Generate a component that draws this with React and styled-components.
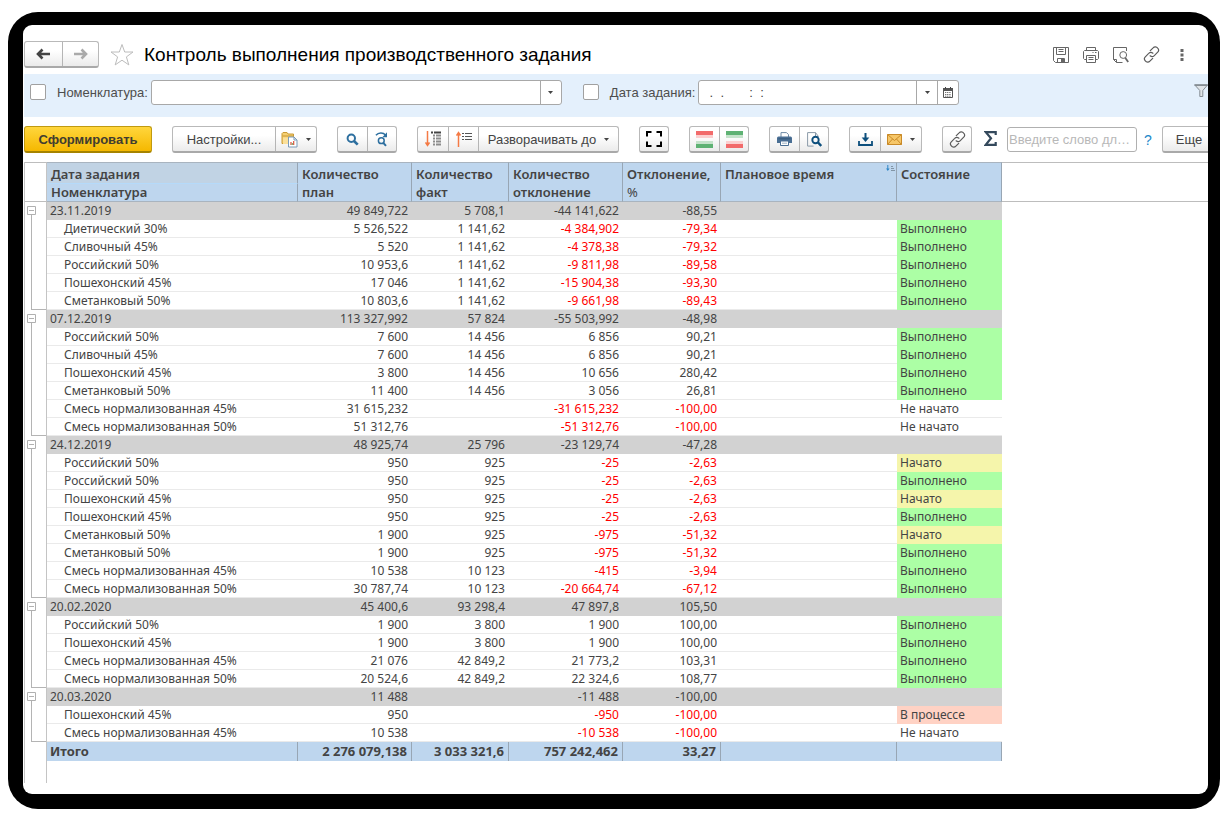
import React, { useState } from 'react';
import styled, { createGlobalStyle, css } from 'styled-components';

const ui = '"Liberation Sans", Arial, sans-serif';
const grid = '"Noto Sans", "Open Sans", sans-serif';

const Global = createGlobalStyle`
  * { box-sizing: border-box; }
  body { margin: 0; background: #fff; font-family: ${ui}; color: #444; }
  button, input { font-family: inherit; color: inherit; }
`;

const Device = styled.div`
  margin: 12px 8px 5px;
  min-height: calc(100vh - 17px);
  padding: 13px 12px 15px 15px;
  border-radius: 30px;
  background: #000;
  display: flex;
`;

const Screen = styled.main`
  flex: 1;
  min-width: 0;
  padding-left: 1px;
  border-radius: 9px;
  background: #fff;
  overflow: hidden;
`;

const TitleBar = styled.header`
  display: flex;
  align-items: center;
  height: 49px;
  padding: 10px 11px 0 0;
`;

const Title = styled.h1`
  margin: 0 auto 0 0;
  font-size: 19px;
  line-height: 24px;
  font-weight: 400;
  color: #000;
  white-space: nowrap;
`;

const IconButton = styled.button`
  display: flex;
  align-items: center;
  justify-content: center;
  width: ${(p) => p.$width || 30}px;
  height: 24px;
  padding: 0;
  border: 0;
  background: none;
`;

const Group = styled.div`
  display: flex;
  flex: none;
  height: 27px;
  border: 1px solid #b9b9b9;
  border-bottom: 2px solid #a9a9a9;
  border-radius: 3px;
  background: linear-gradient(#fff 35%, #ebebeb);
  overflow: hidden;
`;

const ToolButton = styled.button`
  display: flex;
  align-items: center;
  justify-content: center;
  gap: 8px;
  width: ${(p) => p.$width || 30}px;
  padding: 0;
  border: 0;
  background: none;
  font-size: 13px;
  white-space: nowrap;
  & + & { border-left: 1px solid #b5b5b5; }
`;

const FilterBar = styled.section`
  display: flex;
  align-items: center;
  height: 43px;
  padding: 0 0 7px 6px;
  background: #e4f0fc;
`;

const Check = styled.input`
  appearance: none;
  flex: none;
  width: 16px;
  height: 16px;
  margin: 0;
  border: 1px solid #a0a0a0;
  border-radius: 2px;
  background: #fff;
`;

const FieldLabel = styled.label`
  margin: 0 3px 0 11px;
  font-size: 13px;
  color: #4d4d4d;
  white-space: nowrap;
`;

const Field = styled.div`
  display: flex;
  flex: 0 1 ${(p) => p.$basis}px;
  min-width: 0;
  height: 25px;
  margin-right: 21px;
  border: 1px solid #a8a8a8;
  border-radius: 3px;
  background: #fff;
  overflow: hidden;
`;

const FieldInput = styled.input`
  flex: 1;
  min-width: 0;
  padding: 0 3px;
  border: 0;
  outline: 0;
  background: none;
  font-size: 13px;
`;

const FieldButton = styled.button`
  display: flex;
  align-items: center;
  justify-content: center;
  width: 21px;
  padding: 0;
  border: 0;
  border-left: 1px solid #a8a8a8;
  background: none;
`;

const FilterToggle = styled.button`
  flex: none;
  width: 14px;
  height: 16px;
  margin-left: auto;
  padding: 0;
  border: 0;
  background: none;
  overflow: hidden;
`;

const Toolbar = styled.div`
  display: flex;
  align-items: center;
  gap: 20px;
  height: 45px;
  overflow: hidden;
`;

const Primary = styled.button`
  flex: none;
  width: 128px;
  height: 27px;
  border: 1px solid #c09a10;
  border-bottom: 2px solid #a58300;
  border-radius: 3px;
  background: linear-gradient(#ffd63c, #f5b800);
  font-size: 13px;
  font-weight: 700;
  color: #403c30;
`;

const Tail = styled.div`
  display: flex;
  align-items: center;
  gap: 10px;
  flex: none;
  margin-left: -8px;
`;

const Sigma = styled.button`
  width: 13px;
  height: 20px;
  padding: 0;
  border: 0;
  background: none;
`;

const Search = styled.input`
  width: 130px;
  height: 25px;
  padding: 0 1px;
  border: 1px solid #b0b0b0;
  border-radius: 3px;
  font-size: 13px;
  text-overflow: ellipsis;
  &::placeholder { color: #b8b8b8; opacity: 1; }
`;

const Help = styled.a`
  width: 8px;
  margin-left: -3px;
  font-size: 14px;
  line-height: 24px;
  text-align: center;
  text-decoration: none;
  color: #1c87c9;
`;

const Sheet = styled.table`
  width: 100%;
  table-layout: fixed;
  border-spacing: 0;
  border-left: 1px solid #c4c4c4;
  font-family: ${grid};
  font-size: 12px;
  line-height: 17px;
  color: #444;
`;

const Col = styled.col`
  width: ${(p) => p.$width}px;
`;

const headLine = '#98a6b4';

const HeadCell = styled.th`
  height: ${(p) => (p.$half ? 22 : 40)}px;
  padding: 2px 4px 0;
  vertical-align: top;
  text-align: left;
  font-size: 13px;
  font-weight: 600;
  line-height: 18px;
  background: ${(p) => (p.$half ? '#c1d3e4' : '#bed6ee')};
  border-top: 1px solid #a9b4bf;
  border-right: 1px solid ${headLine};
  border-bottom: 1px solid ${(p) => (p.$half ? '#b5dafa' : '#a9b4bf')};
  white-space: nowrap;
  ${(p) => p.$second && css`
    height: 18px;
    padding-top: 0;
    border-top: 0;
    line-height: 17px;
  `}
`;

const Unit = styled.span`
  font-weight: 400;
`;

const HeadFlex = styled.div`
  display: flex;
  justify-content: space-between;
  margin-right: -3px;
`;

const Blank = styled.td`
  padding: 0;
  ${(p) => p.$ruled && css`
    border-top: 1px solid #bdbdbd;
    border-bottom: 1px solid #bdbdbd;
  `}
`;

const Gutter = styled.td`
  height: 18px;
  padding: 0 0 0 2px;
  vertical-align: top;
  border-right: 1px solid #c4c4c4;
  ${(p) => p.$ruled && css`
    border-top: 1px solid #bdbdbd;
    border-bottom: 1px solid #bdbdbd;
  `}
  ${(p) => p.$tall && css`height: 22px;`}
`;

const Toggle = styled.button`
  display: flex;
  flex-direction: column;
  align-items: center;
  width: 9px;
  height: 18px;
  padding: 4px 0 0;
  border: 0;
  background: none;
`;

const Branch = styled.div`
  height: 18px;
  margin-left: 4px;
  border-left: 1px solid #b4b4b4;
  ${(p) => p.$last && css`border-bottom: 1px solid #b4b4b4;`}
`;

const tones = {
  done: '#acffa5',
  started: '#f5f5ab',
  process: '#ffd2c4',
};

const Cell = styled.td`
  height: 18px;
  padding: 0 4px 0 3px;
  white-space: nowrap;
  border-bottom: 1px solid #eaeaea;
  text-align: ${(p) => (p.$num ? 'right' : 'left')};
  ${(p) => p.$indent && css`padding-left: 17px;`}
  ${(p) => p.$negative && css`color: #f00;`}
  ${(p) => p.$tone && css`
    background: ${tones[p.$tone]};
    border-bottom-color: ${tones[p.$tone]};
  `}
  ${(p) => p.$group && css`
    background: #d2d2d2;
    border-bottom-color: #d2d2d2;
  `}
  ${(p) => p.$total && css`
    height: 19px;
    font-size: 13px;
    font-weight: 700;
    background: #bed6ee;
    border-right: 1px solid ${headLine};
    border-bottom: 0;
  `}
`;

const Caret = () => (
  <svg width="5" height="3" viewBox="0 0 5 3"><path d="M0 0h5L2.5 3z" fill="#444" /></svg>
);

const Arrow = ({ flip, color }) => (
  <svg width="15" height="12" viewBox="0 0 15 12">
    <path
      d={flip ? 'M8.500 1.500 13 6l-4.500 4.500M12.500 6H1' : 'M6.500 1.500 2 6l4.500 4.500M2.500 6H14'}
      fill="none" stroke={color} strokeWidth="2.600"
    />
  </svg>
);

const Star = () => (
  <svg width="24" height="24" viewBox="0 0 24 24">
    <path d="M12 1.500l2.700 7.500h8.300l-6.600 4.900 2.400 8L12 17.200l-6.800 4.700 2.400-8L1 9h8.300z" fill="#fff" stroke="#bcbcbc" />
  </svg>
);

const SaveIcon = () => (
  <svg width="16" height="16" viewBox="0 0 16 16" fill="none" stroke="#666">
    <path d="M.5.500h15v15H2.500l-2-2z" /><path d="M3.500.500v7h9v-7M5.500 2.500h5M5.500 4.500h5" />
    <path d="M4.500 15.500v-4h7v4" /><path d="M8 12h3v3H8z" fill="#666" stroke="none" />
  </svg>
);

const PrintIcon = () => (
  <svg width="16" height="16" viewBox="0 0 16 16" fill="none" stroke="#666">
    <path d="M3.500 3.500v-3h9v3M3.500 12.500h-2l-1-1v-7l1-1h13l1 1v7l-1 1h-2" />
    <path d="M3.500 8.500h9v7h-9zM5.500 10.500h5M5.500 12.500h5M9.500 5.500h1M12 5.500h1.500" />
  </svg>
);

const PreviewIcon = () => (
  <svg width="16" height="16" viewBox="0 0 16 16" fill="none" stroke="#666">
    <path d="M13.500 4V.500H.500v12l3 3h6M.500 12.500h3v3" />
    <circle cx="10.200" cy="8" r="3.400" /><path d="M12.200 10.700l3 4.300" strokeWidth="1.800" />
  </svg>
);

const LinkIcon = () => (
  <svg width="17" height="17" viewBox="0 0 17 17" fill="none" stroke="#5c5c5c" strokeWidth="1.200" strokeLinecap="round">
    <path d="M7.300 4.700l2.800-2.800a3 3 0 0 1 4.600.2 3 3 0 0 1 0 4.100l-3.400 3.400a3 3 0 0 1-4.200.2" />
    <path d="M9.700 12.300l-2.800 2.800a3 3 0 0 1-4.600-.2 3 3 0 0 1 0-4.100l3.400-3.400a3 3 0 0 1 4.200-.2" />
  </svg>
);

const DotsIcon = () => (
  <svg width="4" height="12" viewBox="0 0 4 12" fill="#666">
    <path d="M.500 0h3v3h-3zM.500 4.500h3v3h-3zM.500 9h3v3h-3z" />
  </svg>
);

const CalendarIcon = () => (
  <svg width="10" height="11" viewBox="0 0 10 11">
    <path d="M.5 1.500h9v9h-9z" fill="#fff" stroke="#555" />
    <path d="M0 1h10v3H0z" fill="#555" />
    <path d="M2.500 0v2M7.500 0v2" stroke="#444" />
    <path d="M2 5.500h6M2 7.500h6M2 9.200h6" stroke="#777" strokeDasharray="1.200 .6" />
  </svg>
);

const FunnelIcon = () => (
  <svg width="14" height="14" viewBox="0 0 14 14">
    <path d="M.6.8h13L8.800 6.500v6H5.800v-6z" fill="#dfe4e8" stroke="#858d94" />
    <path d="M.6 1.300h13" stroke="#858d94" strokeWidth="1.500" />
  </svg>
);

const FolderIcon = () => (
  <svg width="17" height="17" viewBox="0 0 17 17">
    <path d="M1 12.500V2.500L2 1.500h4l1 1.500h5.500v9.500z" fill="#f5cf72" stroke="#c99a35" />
    <path d="M1.500 5h11.500" stroke="#c99a35" /><path d="M2 13V6.500h11V13z" fill="#fbe09a" />
    <path d="M7.500 6h5.500l3 3v7H7.500z" fill="#fff" stroke="#7b9ab8" />
    <path d="M13 6v3h3" fill="none" stroke="#7b9ab8" />
    <path d="M10 14v-3M12.700 14v-4" stroke="#d9533b" strokeWidth="1.200" /><path d="M11.300 14v-2" stroke="#5da35d" />
  </svg>
);

const FindIcon = () => (
  <svg width="13" height="13" viewBox="0 0 13 13" fill="none" stroke="#2d6f9f" strokeWidth="2">
    <circle cx="5.300" cy="5.300" r="3.700" /><path d="M8 8l3.700 3.700" strokeWidth="2.600" />
  </svg>
);

const FindNextIcon = () => (
  <svg width="14" height="15" viewBox="0 0 14 15" fill="none" stroke="#2d6f9f">
    <path d="M.9 3.300C3.500.5 8 .3 10.500 3" strokeWidth="1.500" />
    <path d="M12 .3v4.900H7.300z" fill="#2d6f9f" stroke="none" />
    <circle cx="6.300" cy="8.700" r="2.900" strokeWidth="1.500" /><path d="M8.300 10.800l2.700 3" strokeWidth="2" />
  </svg>
);

const ExpandIcon = () => (
  <svg width="16" height="16" viewBox="0 0 16 16" fill="none">
    <path d="M2.500 0v14M.5 11.500l2 3 2-3" stroke="#f47a45" strokeWidth="1.500" />
    <path d="M6 1.500h2M9 1.500h7" stroke="#444" strokeWidth="2" />
    <path d="M8 4.500h2M11 4.500h5M8 7.500h2M11 7.500h5M8 10.500h2M11 10.500h5M8 13.500h2M11 13.500h5" stroke="#8c8c8c" strokeWidth="2" />
  </svg>
);

const CollapseIcon = () => (
  <svg width="16" height="16" viewBox="0 0 16 16" fill="none">
    <path d="M2.500 2v14M.5 4.500l2-3 2 3" stroke="#f47a45" strokeWidth="1.500" />
    <path d="M6 2.500h2M9 2.500h7M6 5.500h2M9 5.500h7M6 8.500h2M9 8.500h7" stroke="#555" />
  </svg>
);

const FullIcon = () => (
  <svg width="16" height="16" viewBox="0 0 16 16" fill="none" stroke="#000" strokeWidth="2">
    <path d="M1 5.500V1h4.500M10.500 1H15v4.500M15 10.500V15h-4.500M5.500 15H1v-4.500" />
  </svg>
);

const BandsIcon = ({ top, topFade, bottom, bottomFade }) => (
  <svg width="17" height="17" viewBox="0 0 17 17">
    <path d="M0 0h17v4H0z" fill={top} /><path d="M0 4h17v3H0z" fill={topFade} />
    <path d="M0 10h17v3H0z" fill={bottomFade} /><path d="M0 13h17v4H0z" fill={bottom} />
  </svg>
);

const PrinterSolid = () => (
  <svg width="15" height="14" viewBox="0 0 15 14">
    <path d="M4 5V.6h5.500l2 2V5" fill="#fff" stroke="#6f8aa5" />
    <path d="M1.500 4.500h12A1.500 1.500 0 0 1 15 6v5H0V6a1.500 1.500 0 0 1 1.500-1.500z" fill="#4a6f94" />
    <path d="M3.500 9h8v4.500h-8z" fill="#fff" stroke="#4a6f94" /><path d="M5 11.200h5" stroke="#9fb2c4" />
    <path d="M1.500 6.800h12" stroke="#35577a" />
  </svg>
);

const PreviewSolid = () => (
  <svg width="15" height="15" viewBox="0 0 15 15" fill="none">
    <path d="M11.500 4.500L8.500.6H.6v13.500h6" stroke="#8a9aa8" /><path d="M8.500.6v4h3" stroke="#8a9aa8" />
    <circle cx="8.500" cy="8" r="3.200" stroke="#0d4f7d" strokeWidth="1.900" />
    <path d="M10.800 10.300l3.400 3.700" stroke="#0d4f7d" strokeWidth="2.400" />
  </svg>
);

const DownloadIcon = () => (
  <svg width="15" height="13" viewBox="0 0 15 13">
    <path d="M7.500 0v7" stroke="#0d4f7d" strokeWidth="2" /><path d="M3.700 4.500h7.600L7.500 9z" fill="#0d4f7d" />
    <path d="M1 8v4h13V8" fill="none" stroke="#0d4f7d" strokeWidth="1.800" />
  </svg>
);

const MailIcon = () => (
  <svg width="15" height="11" viewBox="0 0 15 11">
    <path d="M.5.500h14v10H.5z" fill="#f6c667" stroke="#c98a28" />
    <path d="M.5.500l7 6 7-6M.5 10.500L5.500 5M14.500 10.500L9.500 5" fill="none" stroke="#c98a28" />
  </svg>
);

const SigmaIcon = () => (
  <svg width="13" height="15" viewBox="0 0 13 15">
    <path d="M11.700 4V1.200H1.800L7 7.300 1.800 13.800h9.900V11" fill="none" stroke="#34495c" strokeWidth="2.200" />
  </svg>
);

const SortMark = () => (
  <svg width="9" height="7" viewBox="0 0 9 7" fill="none">
    <path d="M1.800 0v5" stroke="#2f86c6" /><path d="M0 3.500h3.600L1.800 6z" fill="#2f86c6" />
    <path d="M5 1.500h2M5 3.500h3M5 5.500h4" stroke="#8295a6" />
  </svg>
);

const MinusBox = () => (
  <svg width="9" height="14" viewBox="0 0 9 14" fill="none" stroke="#b0b0b0">
    <path d="M.5.500h8v8h-8zM2 4.500h5M4.500 9v5" />
  </svg>
);

const B = ['done', 'Выполнено'];
const N = [null, 'Не начато'];
const S = ['started', 'Начато'];
const P = ['process', 'В процессе'];

const groups = [
  { head: ['23.11.2019', '49 849,722', '5 708,1', '-44 141,622', '-88,55'],
    rows: [
      ['Диетический 30%', '5 526,522', '1 141,62', '-4 384,902', '-79,34', B],
      ['Сливочный 45%', '5 520', '1 141,62', '-4 378,38', '-79,32', B],
      ['Российский 50%', '10 953,6', '1 141,62', '-9 811,98', '-89,58', B],
      ['Пошехонский 45%', '17 046', '1 141,62', '-15 904,38', '-93,30', B],
      ['Сметанковый 50%', '10 803,6', '1 141,62', '-9 661,98', '-89,43', B],
    ] },
  { head: ['07.12.2019', '113 327,992', '57 824', '-55 503,992', '-48,98'],
    rows: [
      ['Российский 50%', '7 600', '14 456', '6 856', '90,21', B],
      ['Сливочный 45%', '7 600', '14 456', '6 856', '90,21', B],
      ['Пошехонский 45%', '3 800', '14 456', '10 656', '280,42', B],
      ['Сметанковый 50%', '11 400', '14 456', '3 056', '26,81', B],
      ['Смесь нормализованная 45%', '31 615,232', '', '-31 615,232', '-100,00', N],
      ['Смесь нормализованная 50%', '51 312,76', '', '-51 312,76', '-100,00', N],
    ] },
  { head: ['24.12.2019', '48 925,74', '25 796', '-23 129,74', '-47,28'],
    rows: [
      ['Российский 50%', '950', '925', '-25', '-2,63', S],
      ['Российский 50%', '950', '925', '-25', '-2,63', B],
      ['Пошехонский 45%', '950', '925', '-25', '-2,63', S],
      ['Пошехонский 45%', '950', '925', '-25', '-2,63', B],
      ['Сметанковый 50%', '1 900', '925', '-975', '-51,32', S],
      ['Сметанковый 50%', '1 900', '925', '-975', '-51,32', B],
      ['Смесь нормализованная 45%', '10 538', '10 123', '-415', '-3,94', B],
      ['Смесь нормализованная 50%', '30 787,74', '10 123', '-20 664,74', '-67,12', B],
    ] },
  { head: ['20.02.2020', '45 400,6', '93 298,4', '47 897,8', '105,50'],
    rows: [
      ['Российский 50%', '1 900', '3 800', '1 900', '100,00', B],
      ['Пошехонский 45%', '1 900', '3 800', '1 900', '100,00', B],
      ['Смесь нормализованная 45%', '21 076', '42 849,2', '21 773,2', '103,31', B],
      ['Смесь нормализованная 50%', '20 524,6', '42 849,2', '22 324,6', '108,77', B],
    ] },
  { head: ['20.03.2020', '11 488', '', '-11 488', '-100,00'],
    rows: [
      ['Пошехонский 45%', '950', '', '-950', '-100,00', P],
      ['Смесь нормализованная 45%', '10 538', '', '-10 538', '-100,00', N],
    ] },
];

const total = ['Итого', '2 276 079,138', '3 033 321,6', '757 242,462', '33,27'];
const widths = [22, 251, 114, 97, 114, 98, 176, 105];

function ReportGroup({ head, rows }) {
  const [open, setOpen] = useState(true);
  return (
    <tbody>
      <tr>
        <Gutter>
          <Toggle aria-label={`Группа ${head[0]}`} aria-expanded={open} onClick={() => setOpen(!open)}>
            <MinusBox />
          </Toggle>
        </Gutter>
        {head.map((v, i) => <Cell key={i} $group $num={i > 0}>{v}</Cell>)}
        <Cell $group /><Cell $group />
        <Blank />
      </tr>
      {open && rows.map((row, r) => (
        <tr key={r}>
          <Gutter><Branch $last={r === rows.length - 1} /></Gutter>
          <Cell $indent>{row[0]}</Cell>
          {row.slice(1, 5).map((v, i) => (
            <Cell key={i} $num $negative={v.startsWith('-')}>{v}</Cell>
          ))}
          <Cell />
          <Cell $tone={row[5][0]}>{row[5][1]}</Cell>
          <Blank />
        </tr>
      ))}
    </tbody>
  );
}

export default function App() {
  const [date, setDate] = useState('  .  .       :  :');
  return (
    <>
      <Global />
      <Device>
        <Screen>
          <TitleBar>
            <Group>
              <ToolButton $width={37} aria-label="Назад"><Arrow color="#444" /></ToolButton>
              <ToolButton $width={36} aria-label="Вперед"><Arrow flip color="#aaa" /></ToolButton>
            </Group>
            <IconButton $width={45} aria-label="В избранное"><Star /></IconButton>
            <Title>Контроль выполнения производственного задания</Title>
            <IconButton aria-label="Сохранить"><SaveIcon /></IconButton>
            <IconButton aria-label="Печать"><PrintIcon /></IconButton>
            <IconButton aria-label="Просмотр"><PreviewIcon /></IconButton>
            <IconButton aria-label="Ссылка"><LinkIcon /></IconButton>
            <IconButton $width={31} aria-label="Меню"><DotsIcon /></IconButton>
          </TitleBar>

          <FilterBar>
            <Check type="checkbox" aria-label="Отбор по номенклатуре" />
            <FieldLabel htmlFor="item">Номенклатура:</FieldLabel>
            <Field $basis={411}>
              <FieldInput id="item" />
              <FieldButton aria-label="Выбрать номенклатуру"><Caret /></FieldButton>
            </Field>
            <Check type="checkbox" aria-label="Отбор по дате" />
            <FieldLabel htmlFor="date">Дата задания:</FieldLabel>
            <Field $basis={261}>
              <FieldInput id="date" value={date} onChange={(e) => setDate(e.target.value)} />
              <FieldButton aria-label="Выбрать дату"><Caret /></FieldButton>
              <FieldButton aria-label="Календарь"><CalendarIcon /></FieldButton>
            </Field>
            <FilterToggle aria-label="Фильтр"><FunnelIcon /></FilterToggle>
          </FilterBar>

          <Toolbar>
            <Primary>Сформировать</Primary>
            <Group>
              <ToolButton $width={102}>Настройки...</ToolButton>
              <ToolButton $width={41} aria-label="Варианты"><FolderIcon /><Caret /></ToolButton>
            </Group>
            <Group>
              <ToolButton $width={29} aria-label="Найти"><FindIcon /></ToolButton>
              <ToolButton $width={29} aria-label="Найти далее"><FindNextIcon /></ToolButton>
            </Group>
            <Group>
              <ToolButton aria-label="Развернуть"><ExpandIcon /></ToolButton>
              <ToolButton aria-label="Свернуть"><CollapseIcon /></ToolButton>
              <ToolButton $width={140}>Разворачивать до<Caret /></ToolButton>
            </Group>
            <Group>
              <ToolButton $width={28} aria-label="Во весь экран"><FullIcon /></ToolButton>
            </Group>
            <Group>
              <ToolButton $width={29} aria-label="Сначала отрицательные">
                <BandsIcon top="#f26b6b" topFade="#fbd0d0" bottomFade="#c5e3cb" bottom="#5fb274" />
              </ToolButton>
              <ToolButton $width={29} aria-label="Сначала положительные">
                <BandsIcon top="#5fb274" topFade="#c5e3cb" bottomFade="#fbd0d0" bottom="#f26b6b" />
              </ToolButton>
            </Group>
            <Group>
              <ToolButton $width={29} aria-label="Печать отчета"><PrinterSolid /></ToolButton>
              <ToolButton $width={29} aria-label="Просмотр отчета"><PreviewSolid /></ToolButton>
            </Group>
            <Group>
              <ToolButton aria-label="Сохранить в файл"><DownloadIcon /></ToolButton>
              <ToolButton $width={41} aria-label="Отправить"><MailIcon /><Caret /></ToolButton>
            </Group>
            <Group>
              <ToolButton $width={28} aria-label="Получить ссылку"><LinkIcon /></ToolButton>
            </Group>
            <Tail>
              <Sigma aria-label="Сумма"><SigmaIcon /></Sigma>
              <Search aria-label="Поиск" placeholder="Введите слово для поиска" />
              <Help href="#help">?</Help>
              <Group>
                <ToolButton $width={65}>Еще<Caret /></ToolButton>
              </Group>
            </Tail>
          </Toolbar>

          <Sheet>
            <colgroup>
              {widths.map((w, i) => <Col key={i} $width={w} />)}
              <col />
            </colgroup>
            <thead>
              <tr>
                <Gutter as="td" rowSpan={2} $ruled />
                <HeadCell $half>Дата задания</HeadCell>
                <HeadCell rowSpan={2}>Количество<br />план</HeadCell>
                <HeadCell rowSpan={2}>Количество<br />факт</HeadCell>
                <HeadCell rowSpan={2}>Количество<br />отклонение</HeadCell>
                <HeadCell rowSpan={2}>Отклонение,<br /><Unit>%</Unit></HeadCell>
                <HeadCell rowSpan={2}><HeadFlex>Плановое время<SortMark /></HeadFlex></HeadCell>
                <HeadCell rowSpan={2}>Состояние</HeadCell>
                <Blank rowSpan={2} $ruled />
              </tr>
              <tr>
                <HeadCell $second>Номенклатура</HeadCell>
              </tr>
            </thead>
            {groups.map((g) => <ReportGroup key={g.head[0]} {...g} />)}
            <tfoot>
              <tr>
                <Gutter />
                {total.map((v, i) => <Cell key={i} $total $num={i > 0}>{v}</Cell>)}
                <Cell $total /><Cell $total />
                <Blank />
              </tr>
              <tr>
                <Gutter $tall />
                <Blank colSpan={8} />
              </tr>
            </tfoot>
          </Sheet>
        </Screen>
      </Device>
    </>
  );
}
